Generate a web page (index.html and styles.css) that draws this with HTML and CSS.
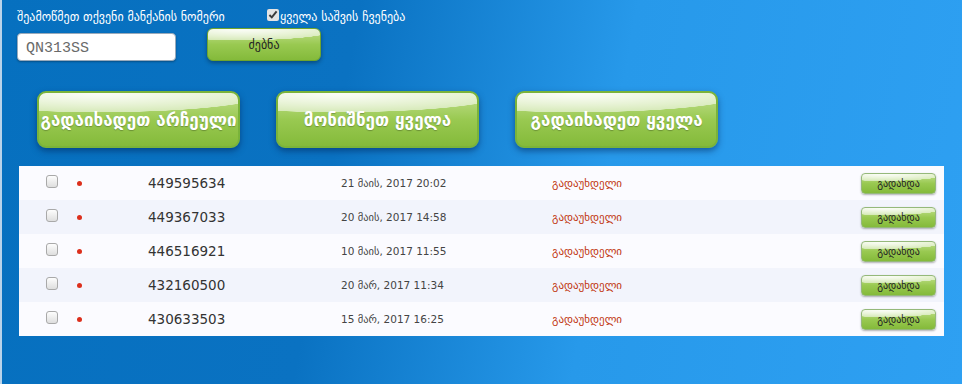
FILE: index.html
```html
<!DOCTYPE html>
<html lang="ka">
<head>
    <meta charset="UTF-8">
    <title>საშვები</title>
    <link rel="stylesheet" href="styles.css">
</head>
<body>

<div class="page">
    <div class="search">
        <div class="search-top">
            <span class="search-label">შეამოწმეთ თქვენი მანქანის ნომერი</span>
            <label class="show-all"><input type="checkbox" checked> ყველა საშვის ჩვენება</label>
        </div>
        <div class="search-row">
            <input class="plate" type="text" value="QN313SS">
            <button class="btn btn-search">ძებნა</button>
        </div>
    </div>

    <div class="actions">
        <button class="btn btn-big">გადაიხადეთ არჩეული</button>
        <button class="btn btn-big">მონიშნეთ ყველა</button>
        <button class="btn btn-big">გადაიხადეთ ყველა</button>
    </div>

    <div class="list">
        <div class="row">
            <span class="cell-check"><input type="checkbox"></span>
            <span class="dot"></span>
            <span class="num">449595634</span>
            <span class="date">21 მაის, 2017 20:02</span>
            <span class="status">გადაუხდელი</span>
            <button class="btn btn-pay">გადახდა</button>
        </div>
        <div class="row">
            <span class="cell-check"><input type="checkbox"></span>
            <span class="dot"></span>
            <span class="num">449367033</span>
            <span class="date">20 მაის, 2017 14:58</span>
            <span class="status">გადაუხდელი</span>
            <button class="btn btn-pay">გადახდა</button>
        </div>
        <div class="row">
            <span class="cell-check"><input type="checkbox"></span>
            <span class="dot"></span>
            <span class="num">446516921</span>
            <span class="date">10 მაის, 2017 11:55</span>
            <span class="status">გადაუხდელი</span>
            <button class="btn btn-pay">გადახდა</button>
        </div>
        <div class="row">
            <span class="cell-check"><input type="checkbox"></span>
            <span class="dot"></span>
            <span class="num">432160500</span>
            <span class="date">20 მარ, 2017 11:34</span>
            <span class="status">გადაუხდელი</span>
            <button class="btn btn-pay">გადახდა</button>
        </div>
        <div class="row">
            <span class="cell-check"><input type="checkbox"></span>
            <span class="dot"></span>
            <span class="num">430633503</span>
            <span class="date">15 მარ, 2017 16:25</span>
            <span class="status">გადაუხდელი</span>
            <button class="btn btn-pay">გადახდა</button>
        </div>
    </div>
</div>

</body>
</html>
```

FILE: styles.css
```css
html, body {
    margin: 0;
    padding: 0;
}
body {
    font-family: "DejaVu Sans", Verdana, sans-serif;
    width: 962px;
    height: 384px;
    overflow: hidden;
    background: linear-gradient(100deg, #0670bf 0%, #0a72c2 35%, #2799ea 62%, #2ea0f2 100%);
    border-left: 2px solid #b9d3ea;
    box-sizing: border-box;
}
.page {
    padding: 8px 0 0 15px;
}
.search-top {
    display: flex;
    align-items: center;
    color: #fff;
    font-size: 12px;
    height: 18px;
}
.search-label {
    width: 250px;
}
.show-all {
    display: flex;
    align-items: center;
}
.show-all input {
    margin: 0 1px 4px 0;
    width: 12px;
    height: 12px;
    accent-color: #e4e4e4;
}
.search-row {
    display: flex;
    align-items: center;
    margin-top: 7px;
}
.plate {
    width: 159px;
    height: 28px;
    box-sizing: border-box;
    border: 1px solid #9ab;
    border-radius: 4px;
    padding: 2px 8px 0;
    font-family: "Liberation Mono", monospace;
    font-size: 15px;
    color: #6a6a6a;
    background: #fff;
    box-shadow: 0 1px 2px rgba(0, 0, 0, 0.3);
}
.btn {
    font-family: "DejaVu Sans", sans-serif;
    border: 1px solid #6fa52d;
    cursor: pointer;
    background:
        radial-gradient(ellipse 140% 60% at 30% 0%, rgba(255, 255, 255, 0.95) 0%, rgba(255, 255, 255, 0.55) 60%, rgba(255, 255, 255, 0) 61%),
        linear-gradient(#c2e08e 0%, #99c951 50%, #84ba3a 100%);
    box-shadow: 0 2px 4px rgba(0, 0, 0, 0.35);
}
.btn-search {
    width: 114px;
    height: 33px;
    margin-left: 31px;
    margin-top: -5px;
    border-radius: 6px;
    font-size: 12px;
    color: #222;
}
.actions {
    display: flex;
    gap: 36px;
    margin: 30px 0 0 20px;
}
.btn-big {
    width: 203px;
    height: 57px;
    border: 2px solid #7ab33a;
    border-radius: 9px;
    color: #fff;
    font-size: 17px;
    font-weight: bold;
    padding: 0;
    text-shadow: 0 1px 1px rgba(0, 0, 0, 0.25);
    box-shadow: 0 3px 6px rgba(0, 30, 80, 0.5);
}
.list {
    width: 925px;
    margin: 18px 0 0 2px;
    background: #fbfbff;
}
.row {
    display: flex;
    align-items: center;
    height: 34px;
}
.row:nth-child(even) {
    background: #f2f4fc;
}
.cell-check {
    width: 39px;
    display: flex;
    justify-content: flex-end;
}
.cell-check input {
    appearance: none;
    margin: 0 0 4px 0;
    width: 12px;
    height: 13px;
    border: 1px solid #a9a9a9;
    border-radius: 3px;
    background: linear-gradient(#fdfdfd, #dedede);
    box-sizing: border-box;
}
.dot {
    width: 5px;
    height: 5px;
    border-radius: 50%;
    background: #dc2f1c;
    margin-left: 19px;
}
.num {
    width: 193px;
    margin-left: 66px;
    font-size: 13.5px;
    color: #333;
}
.date {
    width: 211px;
    font-size: 10.5px;
    color: #444;
}
.status {
    width: 309px;
    font-size: 11px;
    color: #c1360f;
}
.btn-pay {
    width: 75px;
    height: 21px;
    border-radius: 4px;
    font-size: 10px;
    color: #222;
    padding: 0;
    border-color: #95b97a;
    box-shadow: 0 1px 2px rgba(0, 0, 0, 0.3);
}
```
